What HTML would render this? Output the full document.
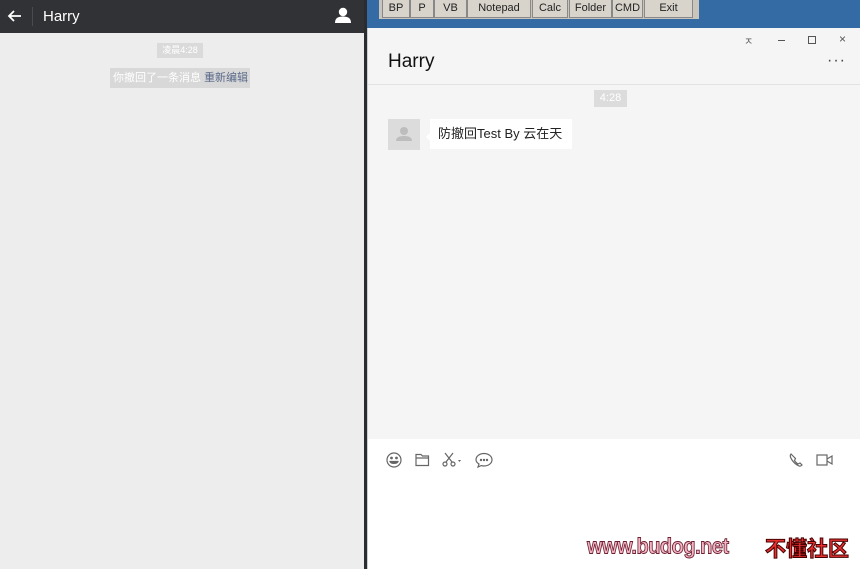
<!DOCTYPE html>
<html><head><meta charset="utf-8"><style>
*{margin:0;padding:0;box-sizing:border-box}
body{width:860px;height:569px;overflow:hidden;position:relative;background:#efefef;font-family:"Liberation Sans","Noto Sans CJK SC",sans-serif}
.abs{position:absolute}
#lh{left:0;top:0;width:364px;height:33px;background:#313235;color:#fff}
#lb{left:0;top:33px;width:364px;height:536px;background:#ededed}
#div{left:364px;top:0;width:3px;height:569px;background:#2b2c2e}
#blue{left:367px;top:0;width:493px;height:28px;background:#356ba5}
.btn{position:absolute;top:0;height:18px;background:#d8d4cc;border:1px solid #888;border-top:none;font-size:11px;color:#222;text-align:center;line-height:17px}
#win{left:367px;top:28px;width:493px;height:541px;background:#f5f5f5;border-left:1px solid #c9ced4}
</style></head><body>
<div id="lh" class="abs">
<svg class="abs" style="left:7px;top:8px" width="16" height="16" viewBox="0 0 16 16"><path d="M14 8H2M7 3L2 8l5 5" stroke="#fff" stroke-width="1.8" fill="none"/></svg>
<div class="abs" style="left:32px;top:7px;width:1px;height:19px;background:#4a4b4e"></div>
<div class="abs" style="left:43px;top:8px;font-size:15px">Harry</div>
<svg class="abs" style="left:334px;top:6px" width="18" height="18" viewBox="0 0 18 18"><circle cx="9" cy="6" r="4.2" fill="#fff"/><path d="M1 17c0-5 3-6.5 8-6.5s8 1.5 8 6.5z" fill="#fff"/></svg>
</div>
<div id="lb" class="abs">
<div class="abs" style="left:157px;top:10px;width:46px;height:15px;background:#dadada;color:#fff;font-size:9px;text-align:center;line-height:15px">凌晨4:28</div>
<div class="abs" style="left:110px;top:35px;width:140px;height:20px;background:#d8d8d8;color:#fff;font-size:11px;line-height:20px;padding-left:3px">你撤回了一条消息 <span style="color:#5a6a8a">重新编辑</span></div>
</div>
<div id="div" class="abs"></div>
<div id="blue" class="abs">
<div class="abs" style="left:12px;top:0;width:320px;height:19px;background:#c9c5bd"></div>
<div class="btn" style="left:15px;width:28px">BP</div>
<div class="btn" style="left:43px;width:24px">P</div>
<div class="btn" style="left:67px;width:33px">VB</div>
<div class="btn" style="left:100px;width:64px">Notepad</div>
<div class="btn" style="left:165px;width:36px">Calc</div>
<div class="btn" style="left:202px;width:43px">Folder</div>
<div class="btn" style="left:245px;width:31px">CMD</div>
<div class="btn" style="left:277px;width:49px">Exit</div>
</div>
<div id="win" class="abs">
<div class="abs" style="left:376px;top:5px;font-size:10px;color:#555">ㅈ</div>
<div class="abs" style="left:410px;top:12px;width:7px;height:1px;background:#555"></div>
<div class="abs" style="left:440px;top:8px;width:8px;height:8px;border:1px solid #555"></div>
<div class="abs" style="left:471px;top:4px;font-size:12px;color:#555">×</div>
<div class="abs" style="left:20px;top:23px;font-size:19px;color:#111">Harry</div>
<div class="abs" style="left:459px;top:24px;font-size:16px;color:#444;letter-spacing:1px">···</div>
<div class="abs" style="left:0;top:56px;width:492px;height:1px;background:#e2e2e2"></div>
<div class="abs" style="left:226px;top:62px;width:33px;height:17px;background:#dcdcdc;color:#fff;font-size:11px;text-align:center;line-height:17px">4:28</div>
<div class="abs" style="left:20px;top:91px;width:32px;height:31px;background:#dcdcdc">
<svg width="32" height="31" viewBox="0 0 32 31"><circle cx="16" cy="12" r="4" fill="#bdbdbd"/><path d="M8 22c0-4 4-5 8-5s8 1 8 5z" fill="#bdbdbd"/></svg></div>
<div class="abs" style="left:58px;top:104px;width:0;height:0;border:5px solid transparent;border-right-color:#fff;border-left:none"></div>
<div class="abs" style="left:62px;top:91px;width:142px;height:30px;background:#fff;font-size:13px;line-height:30px;padding-left:8px;color:#222">防撤回Test By 云在天</div>
<div class="abs" style="left:0;top:411px;width:492px;height:130px;background:#fff"></div>
<svg class="abs" style="left:17px;top:423px" width="120" height="18" viewBox="0 0 120 18" fill="none" stroke="#666" stroke-width="1.2">
<circle cx="9" cy="9" r="7"/><circle cx="6.5" cy="7" r=".8" fill="#666"/><circle cx="11.5" cy="7" r=".8" fill="#666"/><path d="M5 10.5c1 2.5 7 2.5 8 0z" fill="#666"/>
<path d="M31 3.5h5l1.5 1.5h6v9.5h-12.5z M31 7h12.5"/>
<path d="M60 2l7 9M68 2l-7 9"/><circle cx="60" cy="13" r="2"/><circle cx="68" cy="13" r="2"/><path d="M73 9h3l-1.5 2z" fill="#666" stroke="none"/>
<path d="M99 2.5c4.5 0 8 2.8 8 6.3s-3.5 6.2-8 6.2c-1 0-2-.2-2.8-.4L93 16l1-3c-1.8-1.1-3-2.5-3-4.2 0-3.5 3.5-6.3 8-6.3z"/><circle cx="96" cy="9" r=".6" fill="#666"/><circle cx="99" cy="9" r=".6" fill="#666"/><circle cx="102" cy="9" r=".6" fill="#666"/>
</svg>
<svg class="abs" style="left:420px;top:423px" width="50" height="18" viewBox="0 0 50 18" fill="none" stroke="#666" stroke-width="1.2">
<path d="M3 3c-1 1-1 3 1 6s5 5 7 6c1 .4 2 0 3-1l-2-2-2 1c-1-.5-3-2.5-3.5-3.5l1-2-2-2z"/>
<rect x="29" y="4" width="10" height="10"/><path d="M39 8l5-3v8l-5-3"/>
</svg>
<div class="abs" style="left:219px;top:508px;font-size:20px;font-weight:bold;color:#f4b4c4;-webkit-text-stroke:0.8px #6a2030;font-family:'Liberation Sans',sans-serif;letter-spacing:-0.5px;transform:scaleY(1.1)">www.budog.net</div>
<div class="abs" style="left:397px;top:505px;font-size:21px;font-weight:bold;color:#e83030;-webkit-text-stroke:1px #400;font-family:'Noto Sans CJK SC',sans-serif">不懂社区</div>
</div>
</body></html>
